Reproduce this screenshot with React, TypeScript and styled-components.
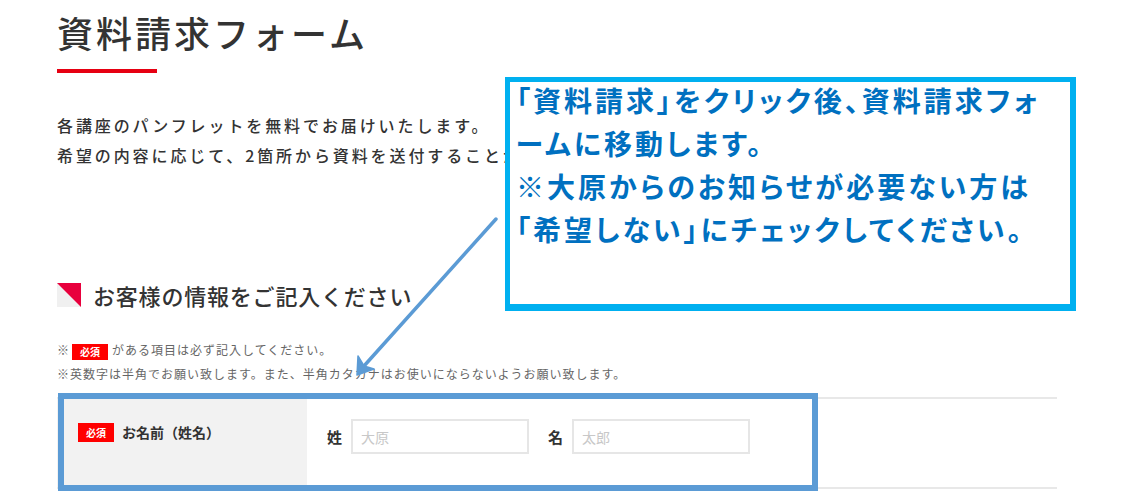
import React from 'react'
import styled, { createGlobalStyle } from 'styled-components'

const GlobalStyle = createGlobalStyle`
  body {
    margin: 0;
    background: #ffffff;
    font-family: 'Noto Sans CJK JP', 'Noto Sans', sans-serif;
    color: #333333;
  }
`

const Page = styled.div`
  position: relative;
  width: 1143px;
  height: 494px;
  overflow: hidden;
  padding-left: 57px;
  box-sizing: border-box;
`

const Title = styled.h1`
  margin: 0;
  padding-top: 14px;
  font-size: 36px;
  line-height: 36px;
  font-weight: 500;
  letter-spacing: 3px;
  color: #333333;
`

const TitleBar = styled.div`
  width: 100px;
  height: 4px;
  margin-top: 19px;
  background: #e60012;
`

// the callout covers the rest of the second line, so clip it at the callout edge
const Intro = styled.p`
  width: 448px;
  margin: 37px 0 0;
  overflow: hidden;
  white-space: nowrap;
  font-size: 16px;
  line-height: 30px;
  font-weight: 500;
  letter-spacing: 2.9px;
  color: #333333;
`

const SectionHead = styled.h2`
  display: flex;
  align-items: center;
  gap: 12px;
  height: 24px;
  margin: 113px 0 0;
  font-size: 22px;
  font-weight: 500;
  letter-spacing: 0.8px;
  color: #333333;
`

const Notes = styled.div`
  margin-top: 31px;
  font-size: 12px;
  line-height: 24px;
  letter-spacing: 1px;
  color: #666666;
`

const Badge = styled.span<{ big?: boolean }>`
  display: inline-flex;
  align-items: center;
  justify-content: center;
  width: 36px;
  height: ${({ big }) => (big ? '19px' : '16px')};
  margin: ${({ big }) => (big ? '0 8px 0 0' : '0 4px 0 2px')};
  background: #ff0000;
  color: #ffffff;
  font-size: 10px;
  font-weight: 700;
  letter-spacing: 0;
  line-height: 1;
  vertical-align: middle;
  flex-shrink: 0;
`

const FormTable = styled.div`
  width: 1000px;
  margin-top: 11px;
  border-top: 2px solid #e8e8e8;
  border-bottom: 2px solid #e8e8e8;
  display: flex;
  height: 92px;
  box-sizing: border-box;
`

const LabelCell = styled.div`
  width: 250px;
  background: #f2f2f2;
  padding: 24px 0 0 21px;
  box-sizing: border-box;
  display: flex;
  align-items: flex-start;
`

const LabelText = styled.span`
  font-size: 14px;
  line-height: 19px;
  font-weight: 700;
  color: #333333;
`

const FieldCell = styled.div`
  flex: 1;
  display: flex;
  align-items: center;
  align-self: flex-start;
  padding: 20px 0 0 20px;
  gap: 9px;
`

const FieldLabel = styled.span<{ first?: boolean }>`
  font-size: 15px;
  font-weight: 700;
  color: #333333;
  margin-left: ${({ first }) => (first ? '0' : '10px')};
`

const TextInput = styled.input`
  width: 178px;
  height: 35px;
  box-sizing: border-box;
  border: 2px solid #e6e6e6;
  padding: 0 8px;
  font-family: inherit;
  font-size: 14px;
  outline: none;
  &::placeholder {
    color: #c8c8c8;
  }
`

const Callout = styled.div`
  position: absolute;
  left: 505px;
  top: 77px;
  width: 571px;
  height: 234px;
  box-sizing: border-box;
  border: 5px solid #00b0f0;
  border-right-width: 6px;
  border-bottom-width: 7px;
  background: #ffffff;
  padding: 0 0 0 6px;
`

const CalloutText = styled.p`
  margin: -3px 0 0;
  font-size: 28px;
  line-height: 43px;
  font-weight: 700;
  letter-spacing: 3px;
  font-feature-settings: 'palt';
  white-space: nowrap;
  color: #0070c0;
`

const Highlight = styled.div`
  position: absolute;
  left: 58px;
  top: 393px;
  width: 760px;
  height: 98px;
  box-sizing: border-box;
  border: 6px solid #5b9bd5;
  pointer-events: none;
`

const ArrowLayer = styled.svg`
  position: absolute;
  left: 0;
  top: 0;
  pointer-events: none;
`

function HeadMark() {
  return (
    <svg width="24" height="24" viewBox="0 0 24 24">
      <rect width="24" height="24" fill="#f0f0f0" />
      <polygon points="0,0 24,0 24,24" fill="#e8003d" />
    </svg>
  )
}

export default function App() {
  return (
    <>
      <GlobalStyle />
      <Page>
        <Title>資料請求フォーム</Title>
        <TitleBar />
        <Intro>
          各講座のパンフレットを無料でお届けいたします。
          <br />
          希望の内容に応じて、2箇所から資料を送付することができます。
        </Intro>
        <SectionHead>
          <HeadMark />
          お客様の情報をご記入ください
        </SectionHead>
        <Notes>
          <div>
            ※<Badge>必須</Badge>がある項目は必ず記入してください。
          </div>
          <div>※英数字は半角でお願い致します。また、半角カタカナはお使いにならないようお願い致します。</div>
        </Notes>
        <FormTable>
          <LabelCell>
            <Badge big>必須</Badge>
            <LabelText>お名前（姓名）</LabelText>
          </LabelCell>
          <FieldCell>
            <FieldLabel first>姓</FieldLabel>
            <TextInput placeholder="大原" />
            <FieldLabel>名</FieldLabel>
            <TextInput placeholder="太郎" />
          </FieldCell>
        </FormTable>

        <Callout>
          <CalloutText>
            「資料請求」をクリック後、資料請求フォ
            <br />
            ームに移動します。
            <br />
            ※大原からのお知らせが必要ない方は
            <br />
            「希望しない」にチェックしてください。
          </CalloutText>
        </Callout>
        <Highlight />
        <ArrowLayer width="1143" height="494" viewBox="0 0 1143 494">
          <line x1="496" y1="219" x2="364" y2="366" stroke="#5b9bd5" strokeWidth="3.5" strokeLinecap="round" />
          <path d="M357 375 L358 356 L364 366 L374 369 Z" fill="#5b9bd5" stroke="#5b9bd5" strokeWidth="1.5" strokeLinejoin="round" />
        </ArrowLayer>
      </Page>
    </>
  )
}
